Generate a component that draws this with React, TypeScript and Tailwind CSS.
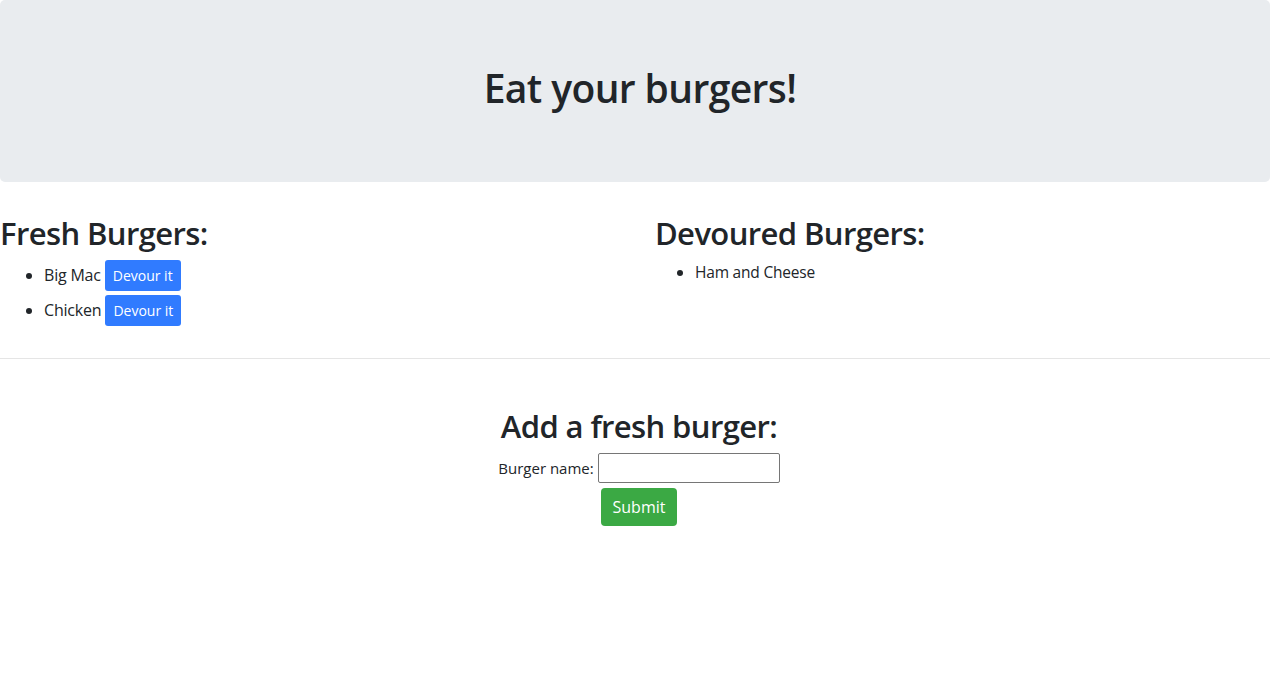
import React, {useState} from "react";

const fresh = ["Big Mac", "Chicken"];
const devoured = ["Ham and Cheese"];

export default function App() {
  const [name, setName] = useState("");

  return (
    <div className="min-h-screen bg-white text-[#212529] font-['Open_Sans',_'Noto_Sans',_sans-serif] text-base">
      <div className="bg-[#e9ecef] rounded-[5px] pt-16 pb-[62px] mb-8 pl-[10px]">
        <h1 className="text-center text-[39px] leading-[48px] font-semibold tracking-[-0.6px] mb-2">Eat your burgers!</h1>
      </div>

      <div className="grid grid-cols-[655px_1fr]">
        <div>
          <h2 className="text-[31px] leading-[38px] font-semibold tracking-[-0.6px] mb-2">Fresh Burgers:</h2>
          <ul className="list-disc pl-11 mb-4">
            {fresh.map((b) => (
              <li key={b} className="leading-[31px] mb-1 tracking-[-0.2px]">
                {b}{" "}
                <button className="inline-block align-top h-[31px] px-2 text-sm leading-[21px] text-white bg-[#307bff] rounded-[3px] tracking-normal">
                  Devour it
                </button>
              </li>
            ))}
          </ul>
        </div>
        <div>
          <h2 className="text-[31px] leading-[38px] font-semibold tracking-[-0.6px] mb-2">Devoured Burgers:</h2>
          <ul className="list-disc pl-10 mb-4">
            {devoured.map((b) => (
              <li key={b} className="leading-[24px] text-[15.5px] tracking-[-0.2px]">
                {b}
              </li>
            ))}
          </ul>
        </div>
      </div>

      <hr className="my-4 border-0 border-t border-[rgba(0,0,0,0.1)]" />

      <div className="pt-8 pl-[8px] flex flex-col items-center">
        <h2 className="text-[31px] leading-[38px] font-semibold tracking-[-0.6px] mb-2">Add a fresh burger:</h2>
        <form
          className="flex flex-col items-center gap-[5px]"
          onSubmit={(e) => {
            e.preventDefault();
            setName("");
          }}
        >
          <div className="flex items-center gap-1">
            <label htmlFor="burger" className="text-[15px]">
              Burger name:
            </label>
            <input
              id="burger"
              value={name}
              onChange={(e) => setName(e.target.value)}
              className="w-[182px] h-[30px] border border-[#767676] rounded-[2px] px-1"
            />
          </div>
          <button type="submit" className="h-[38px] px-3 leading-6 text-white bg-[#3ba944] rounded-[4px]">
            Submit
          </button>
        </form>
      </div>
    </div>
  );
}
